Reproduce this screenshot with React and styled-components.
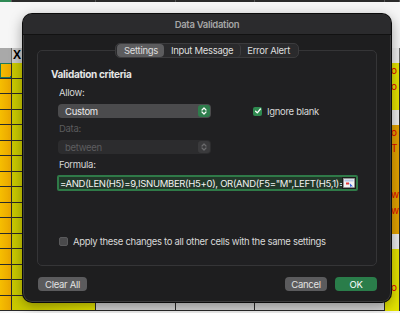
import React from 'react';
import styled, { createGlobalStyle } from 'styled-components';

const GlobalStyle = createGlobalStyle`
  html, body {
    margin: 0;
    padding: 0;
    background: #f5f5f5;
  }
  body {
    font-family: 'Inter', 'Liberation Sans', sans-serif;
  }
`;

const rightCells = [
  { bg: 'yellow', text: 'o' },
  { bg: 'yellow', text: 'o A' },
  { bg: 'yellow', text: '' },
  { bg: 'light', text: '' },
  { bg: 'orange', text: 'o A' },
  { bg: 'orange', text: 'T' },
  { bg: 'orange', text: '' },
  { bg: 'orange', text: '' },
  { bg: 'orange', text: 'w' },
  { bg: 'orange', text: 'w' },
  { bg: 'orange', text: '' },
  { bg: 'light', text: '' },
  { bg: 'yellow', text: '' },
  { bg: 'yellow', text: '' },
  { bg: 'yellow', text: 'o A' },
  { bg: 'yellow', text: '' }
];

const bandColors = {
  yellow: '#e4e300',
  orange: '#e3a200',
  light: '#ececec'
};

const Page = styled.div`
  position: relative;
  width: 400px;
  height: 313px;
  overflow: hidden;
  background: #f5f5f5;
`;

const Sheet = styled.div`
  display: flex;
  flex-direction: column;
`;

const TopLine = styled.div`
  height: 2px;
  display: grid;
  grid-template-columns: 12px 84px 80px 79px 130px 15px;
  background: #2b2b2b;
  span {
    border-right: 1px solid #555;
  }
  span:first-child {
    background: #2f8a55;
  }
`;

const Blank = styled.div`
  height: 46px;
  background: #f6f6f6;
`;

const Row = styled.div`
  display: grid;
  grid-template-columns: 12px 84px 80px 79px 130px 15px;
  height: ${p => (p.$header ? 15 : 15.5)}px;
`;

const Cell = styled.div`
  box-sizing: border-box;
  border-right: 1px solid #2a2a2a;
  border-bottom: ${p => (p.$band ? 'none' : '1px solid #2a2a2a')};
  overflow: hidden;
  white-space: nowrap;
  position: relative;
  font-size: 10px;
  line-height: 15px;
  color: #e00000;
  padding-left: ${p => p.$pad || 0}px;
  background: ${p => p.$bg};
`;

const HeadCell = styled.div`
  box-sizing: border-box;
  border-right: 1px solid #6a6a6a;
  border-bottom: 1px solid #7a7a7a;
  background: ${p => p.$bg || '#a9a9a9'};
  font-family: 'Liberation Sans', sans-serif;
  font-weight: 700;
  font-size: 12px;
  line-height: 15px;
  color: #000;
  padding-left: 1px;
`;

const Selected = styled.div`
  position: absolute;
  inset: 0 -1px 0 0;
  border: 1.5px solid #1f7a5c;
  &::after {
    content: '';
    position: absolute;
    right: -3px;
    bottom: -3px;
    width: 4px;
    height: 4px;
    background: #1f7a5c;
  }
`;

const Dialog = styled.div`
  position: absolute;
  left: 23px;
  top: 14px;
  width: 368px;
  height: 288px;
  box-sizing: border-box;
  background: #1e1e1f;
  border-radius: 9px;
  box-shadow: 0 0 0 1px #0b0b0b, inset 0 0 0 1px rgba(255, 255, 255, 0.13),
    0 4px 14px rgba(0, 0, 0, 0.4);
  display: flex;
  flex-direction: column;
  overflow: hidden;
  letter-spacing: -0.3px;
`;

const TitleBar = styled.div`
  height: 19px;
  flex: none;
  background: #2b2b2d;
  border-bottom: 1px solid #121212;
  display: flex;
  align-items: center;
  justify-content: center;
  padding-top: 1px;
  font-size: 9.5px;
  font-weight: 600;
  color: #a6a6a6;
`;

const Body = styled.div`
  flex: 1;
  display: flex;
  flex-direction: column;
  padding: 8px 14px 0 14px;
`;

const Tabs = styled.div`
  align-self: center;
  display: flex;
  align-items: center;
  height: 15px;
  box-sizing: border-box;
  padding: 0 1px;
  background: #2a2a2c;
  border: 1px solid #3b3b3d;
  border-radius: 5px;
  position: relative;
  z-index: 1;
`;

const Tab = styled.div`
  height: 13px;
  display: flex;
  align-items: center;
  padding: 0 6.5px;
  font-size: 9.5px;
  color: #dedede;
  border-radius: 4px;
  background: ${p => (p.$active ? '#5c5c5e' : 'transparent')};
  border-right: ${p => (p.$divider ? '1px solid #3e3e40' : 'none')};
`;

const Group = styled.div`
  margin-top: -8px;
  height: 216px;
  box-sizing: border-box;
  border: 1px solid #353537;
  border-radius: 5px;
  background: #202022;
  display: flex;
  flex-direction: column;
  padding: 17px 0 0 13px;
`;

const Heading = styled.div`
  font-size: 10px;
  font-weight: 700;
  color: #e6e6e6;
  line-height: 12px;
`;

const Label = styled.div`
  font-size: 9.5px;
  line-height: 12px;
  color: ${p => (p.$disabled ? '#5b5b5d' : '#d6d6d6')};
  padding-left: 8px;
  margin-top: ${p => p.$top || 0}px;
`;

const PopupRow = styled.div`
  display: flex;
  align-items: center;
  margin-top: 5px;
  padding-left: 7px;
`;

const Popup = styled.div`
  width: 153px;
  height: 14px;
  box-sizing: border-box;
  border-radius: 4px;
  display: flex;
  align-items: center;
  justify-content: space-between;
  padding: 0 1px 0 7px;
  font-size: 9.5px;
  background: ${p => (p.$disabled ? '#2c2c2e' : '#4b4b4d')};
  color: ${p => (p.$disabled ? '#5d5d5f' : '#ececec')};
`;

const Stepper = styled.div`
  width: 12px;
  height: 12px;
  border-radius: 3px;
  display: flex;
  align-items: center;
  justify-content: center;
  background: ${p => (p.$disabled ? '#3a3a3c' : '#2e7d4c')};
`;

const Check = styled.label`
  display: flex;
  align-items: center;
  gap: 5px;
  font-size: 9.5px;
  color: #d8d8d8;
  margin-left: ${p => p.$left || 0}px;
  margin-top: ${p => p.$top || 0}px;
`;

const Box = styled.span`
  width: 9px;
  height: 9px;
  box-sizing: border-box;
  border-radius: 2px;
  display: flex;
  align-items: center;
  justify-content: center;
  background: ${p => (p.$on ? '#2f8a50' : '#4a4a4c')};
  border: ${p => (p.$on ? 'none' : '1px solid #5a5a5c')};
`;

const Formula = styled.div`
  margin-top: 4px;
  margin-left: 6px;
  width: 301px;
  height: 16px;
  box-sizing: border-box;
  border: 2px solid #2f7a48;
  border-radius: 2px;
  background: #22382a;
  display: flex;
  align-items: center;
  overflow: hidden;
`;

const FormulaText = styled.div`
  flex: 1;
  overflow: hidden;
  white-space: nowrap;
  font-size: 9.5px;
  color: #f2f2f2;
  padding-left: 1px;
`;

const RangeButton = styled.div`
  width: 14px;
  height: 12px;
  flex: none;
  background: #1c1c1c;
  display: flex;
  align-items: center;
  justify-content: center;
`;

const Footer = styled.div`
  display: flex;
  align-items: center;
  margin-top: 11px;
  padding: 0 0 0 1px;
`;

const Button = styled.div`
  height: 14px;
  box-sizing: border-box;
  border-radius: 4px;
  display: flex;
  align-items: center;
  justify-content: center;
  width: ${p => p.$w}px;
  margin-left: ${p => p.$left || 0}px;
  font-size: 9.5px;
  color: ${p => (p.$primary ? '#ffffff' : '#e2e2e2')};
  background: ${p => (p.$primary ? '#2a7d4a' : '#5b5b5d')};
`;

const StepperIcon = ({ color }) => (
  <svg width="8" height="10" viewBox="0 0 8 10">
    <path d="M2 4 L4 2 L6 4 M2 6 L4 8 L6 6" fill="none" stroke={color} strokeWidth="1.2" strokeLinecap="round" strokeLinejoin="round" />
  </svg>
);

const CheckIcon = () => (
  <svg width="8" height="8" viewBox="0 0 8 8">
    <path d="M1.6 4.2 L3.3 5.9 L6.4 2" fill="none" stroke="#fff" strokeWidth="1.3" strokeLinecap="round" strokeLinejoin="round" />
  </svg>
);

const RangeIcon = () => (
  <svg width="12" height="10" viewBox="0 0 12 10">
    <rect x="0.5" y="0.5" width="11" height="9" fill="#f2f2f2" stroke="#9a9a9a" strokeWidth="0.6" />
    <rect x="1.5" y="1.5" width="9" height="2" fill="#b9c9e6" />
    <rect x="3" y="4.5" width="3" height="2" fill="#e23b3b" />
    <path d="M6.5 5 L10 8.5 L8.3 8.3 L7.6 9.6 Z" fill="#2a5bd7" />
  </svg>
);

const leftOrange = 'linear-gradient(90deg, #f6be00, #eaa600)';
const leftYellow = 'linear-gradient(90deg, #c9c900, #e6e600)';

const App = () => {
  return (
    <Page>
      <GlobalStyle />
      <Sheet>
        <TopLine>
          <span />
          <span />
          <span />
          <span />
          <span />
          <span />
        </TopLine>
        <Blank />
        <Row $header>
          <HeadCell />
          <HeadCell $bg="#c9c9c9">X</HeadCell>
          <HeadCell $bg="#d4d4d4" />
          <HeadCell $bg="#d4d4d4" />
          <HeadCell $bg="#d4d4d4" />
          <HeadCell $bg="#ededed" />
        </Row>
        {rightCells.map((c, i) => (
          <Row key={i}>
            <Cell $bg={leftOrange}>{i === 0 && <Selected />}</Cell>
            <Cell $bg={leftYellow} />
            <Cell $bg="#d8d8d8" />
            <Cell $bg="#d8d8d8" />
            <Cell $bg="#d8d8d8" />
            <Cell $bg={bandColors[c.bg]} $pad={6} $band>
              {c.text}
            </Cell>
          </Row>
        ))}
      </Sheet>

      <Dialog>
        <TitleBar>Data Validation</TitleBar>
        <Body>
          <Tabs>
            <Tab $active>Settings</Tab>
            <Tab $divider>Input Message</Tab>
            <Tab>Error Alert</Tab>
          </Tabs>
          <Group>
            <Heading>Validation criteria</Heading>
            <Label $top={7}>Allow:</Label>
            <PopupRow>
              <Popup>
                Custom
                <Stepper>
                  <StepperIcon color="#ffffff" />
                </Stepper>
              </Popup>
              <Check $left={42}>
                <Box $on>
                  <CheckIcon />
                </Box>
                Ignore blank
              </Check>
            </PopupRow>
            <Label $top={5} $disabled>
              Data:
            </Label>
            <PopupRow>
              <Popup $disabled>
                between
                <Stepper $disabled>
                  <StepperIcon color="#6a6a6c" />
                </Stepper>
              </Popup>
            </PopupRow>
            <Label $top={5}>Formula:</Label>
            <Formula>
              <FormulaText>=AND(LEN(H5)=9,ISNUMBER(H5+0), OR(AND(F5="M",LEFT(H5,1)=1,AND(F5="F",LEFT(H5,1)=2)))</FormulaText>
              <RangeButton>
                <RangeIcon />
              </RangeButton>
            </Formula>
            <Check $left={8} $top={45}>
              <Box />
              Apply these changes to all other cells with the same settings
            </Check>
          </Group>
          <Footer>
            <Button $w={49}>Clear All</Button>
            <Button $w={42} $left={198}>
              Cancel
            </Button>
            <Button $w={42} $left={8} $primary>
              OK
            </Button>
          </Footer>
        </Body>
      </Dialog>
    </Page>
  );
};

export default App;
